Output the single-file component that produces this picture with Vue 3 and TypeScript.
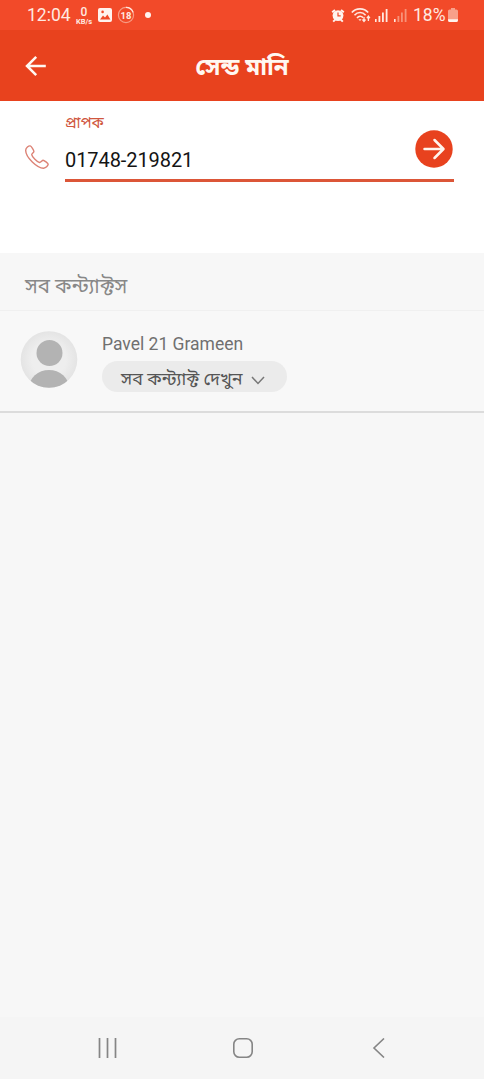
<script setup lang="ts">
import { ref } from 'vue'

interface Contact {
  name: string
  action: string
}

const recipient = ref<string>('01748-219821')
const contacts: Contact[] = [{ name: 'Pavel 21 Grameen', action: 'সব কন্ট্যাক্ট দেখুন' }]
</script>

<template>
  <div class="screen">
    <div class="status">
      <span class="clock">12:04</span>
      <span class="speed"><b>0</b><small>KB/s</small></span>
      <svg class="photo" width="14" height="14" viewBox="0 0 14 14">
        <rect width="14" height="14" rx="2" fill="#fff3ee" />
        <path d="M2 11.5 5 7.5 7 9.6 9.4 6.5 12.4 11.5Z" fill="#f04a28" />
        <circle cx="4.6" cy="3.9" r="1.3" fill="#f04a28" />
      </svg>
      <span class="count">
        <svg width="18" height="18" viewBox="0 0 18 18" fill="none">
          <circle cx="9" cy="9" r="7.6" stroke="#f79b84" stroke-width="1.2" />
          <path d="M9 1.4a7.6 7.6 0 0 1 7.1 5" stroke="#ffe5dc" stroke-width="1.3" />
        </svg>
        <em>18</em>
      </span>
      <i class="dot"></i>
      <span class="grow"></span>
      <svg class="alarm" width="14" height="15" viewBox="0 0 14 15" fill="none" stroke="#fff3ee">
        <circle cx="7" cy="7.6" r="5.4" fill="#fff3ee" stroke="none" />
        <path d="M1.200 4.200 4 1.900M12.800 4.200 10 1.900M2.200 13.600l2-2M11.800 13.600 9.800 11.600" stroke-width="2" />
        <path d="M7 4.600v3.300h2.700" stroke="#f04a28" stroke-width="1.200" />
      </svg>
      <svg class="wifi" width="20" height="16" viewBox="0 0 20 16" fill="none" stroke="#ffe9e1" stroke-width="1.600">
        <path d="M.8 5.500C5 .6 13 .6 17.200 5.500M3.500 8.200c3.100-3.600 8-3.600 11.100 0M6 11c1.800-2.200 4.300-2.200 6-.4" />
        <path d="M7.400 12.200 9 14l1.600-1.800Z" fill="#ffe9e1" stroke="none" />
        <path d="M13 10v4M11.500 12.500 13 14.400l1.500-1.900M17.400 14V9.500M15.900 11.200l1.500-2 1.500 2" stroke-width="1.300" />
      </svg>
      <svg class="bars" width="13" height="13" viewBox="0 0 13 13" fill="#ffe9e1">
        <rect x="0" y="10" width="1.600" height="3" /><rect x="3.500" y="7" width="1.800" height="6" />
        <rect x="7" y="3.500" width="1.800" height="9.500" /><rect x="10.700" y="0" width="1.800" height="13" />
      </svg>
      <svg class="bars second" width="13" height="13" viewBox="0 0 13 13" fill="#f79279">
        <rect x="0" y="10" width="1.600" height="3" fill="#ffe9e1" /><rect x="3.500" y="7" width="1.800" height="6" />
        <rect x="7" y="3.500" width="1.800" height="9.500" /><rect x="10.700" y="0" width="1.800" height="13" />
      </svg>
      <span class="percent">18%</span>
      <svg class="battery" width="10" height="14" viewBox="0 0 10 14">
        <path d="M3 0h4v1.400h1.400Q10 1.400 10 3v9q0 2-1.600 2H1.600Q0 14 0 12V3q0-1.600 1.600-1.600H3Z" fill="#f8a08a" />
        <path d="M0 11.200h10v.8q0 2-1.600 2H1.600Q0 14 0 12Z" fill="#fff3ee" />
      </svg>
    </div>

    <header class="header">
      <svg class="back" width="22" height="22" viewBox="0 0 22 22" fill="none" stroke="#fff8f2" stroke-width="2.500">
        <path d="M20.800 11H2M11.200 1.800 2 11l9.200 9.200" />
      </svg>
      <h1>সেন্ড মানি</h1>
    </header>

    <section class="recipient">
      <svg class="phone" width="24" height="24" viewBox="0 0 24 24" fill="none" stroke="#dc8275" stroke-width="1.400" stroke-linejoin="round">
        <path d="M5.200.9C3.700.6.8 2.900.7 5.200.6 8 3.500 13.300 7.300 17c3.900 3.800 8.400 6.300 11.400 6.200 2.100-.1 4.300-2.200 4.500-4 .1-.8-4.200-4-5.100-4-.9 0-2.500 2.500-3.600 2.300C12.300 17.200 7 11.800 6.700 9.700 6.600 8.700 8.900 7.400 8.900 6.400 8.900 5.500 6.300 1.100 5.200.9Z" />
      </svg>
      <div class="field">
        <label>প্রাপক</label>
        <div class="number">{{ recipient }}</div>
      </div>
      <button class="go">
        <svg width="38" height="38" viewBox="0 0 38 38" fill="none">
          <circle cx="19" cy="19" r="18.700" fill="#e8421e" />
          <path d="M9.500 19h18M19.500 10l9 9-9 9" stroke="#fff5ed" stroke-width="2.500" stroke-linecap="round" stroke-linejoin="round" />
        </svg>
      </button>
    </section>

    <h2>সব কন্ট্যাক্টস</h2>

    <div v-for="c in contacts" :key="c.name" class="contact">
      <svg class="avatar" width="58" height="58" viewBox="0 0 58 58">
        <defs>
          <radialGradient id="disc"><stop offset=".6" stop-color="#eeeeee" /><stop offset="1" stop-color="#e4e4e4" /></radialGradient>
          <clipPath id="round"><circle cx="29" cy="28.500" r="28.300" /></clipPath>
        </defs>
        <circle cx="29" cy="28.500" r="28.300" fill="url(#disc)" />
        <g clip-path="url(#round)" fill="#b3b3b3">
          <circle cx="29.500" cy="22" r="13" />
          <ellipse cx="29" cy="57" rx="20" ry="18" />
        </g>
      </svg>
      <div class="info">
        <div class="name">{{ c.name }}</div>
        <button class="pill">
          <span>{{ c.action }}</span>
          <svg width="14" height="9" viewBox="0 0 14 9" fill="none" stroke="#777" stroke-width="1.500"><path d="M1 1l6 6.500L13 1" /></svg>
        </button>
      </div>
    </div>

    <nav class="nav">
      <svg width="20" height="20" viewBox="0 0 20 20" stroke="#858585" stroke-width="1.700"><path d="M1.500 0v20M9.500 0v20M17.500 0v20" /></svg>
      <svg width="20" height="20" viewBox="0 0 20 20" fill="none" stroke="#858585" stroke-width="1.600"><rect x=".8" y=".8" width="18.400" height="18.400" rx="5.500" /></svg>
      <svg width="20" height="20" viewBox="0 0 20 20" fill="none" stroke="#858585" stroke-width="1.600"><path d="M16 .5 6 10l10 9.500" /></svg>
    </nav>
  </div>
</template>

<style>
body { margin: 0; }
</style>

<style scoped>
.screen {
  width: 484px;
  height: 1079px;
  display: flex;
  flex-direction: column;
  background: #f7f7f7;
  font-family: Roboto, "Noto Sans Bengali", sans-serif;
  overflow: hidden;
}
.screen * { box-sizing: border-box; }
button { border: 0; padding: 0; background: none; font: inherit; }
svg { display: block; flex: none; }

.status {
  height: 30px;
  flex: none;
  display: flex;
  align-items: center;
  padding: 0 26px 0 27px;
  background: #f24a29;
  color: #ffe9e1;
}
.clock { font-size: 17.500px; width: 48px; white-space: nowrap; }
.speed { width: 18px; display: flex; flex-direction: column; align-items: center; padding-top: 2px; }
.speed b { font-size: 12px; line-height: 11px; font-weight: 500; }
.speed small { font-size: 7.500px; line-height: 7px; font-weight: 700; }
.photo { margin-left: 5px; }
.count { display: grid; place-items: center; margin-left: 5px; width: 18px; }
.count > * { grid-area: 1 / 1; }
.count em { font: 700 9.500px Roboto, sans-serif; }
.dot { width: 6px; height: 6px; border-radius: 50%; background: #fff3ee; margin-left: 10px; }
.grow { flex: 1; }
.alarm { margin-right: 6px; }
.wifi { margin-right: 4px; }
.second { margin-left: 6px; }
.percent { font-size: 17.500px; margin-left: 6px; width: 35px; white-space: nowrap; }

.header {
  height: 71px;
  flex: none;
  display: grid;
  grid-template-columns: 60px 1fr 60px;
  align-items: center;
  background: #e8421e;
}
.back { margin-left: 25px; }
h1 { margin: 2px 0 0; text-align: center; color: #fff8f2; font-size: 24px; line-height: 30px; font-weight: 700; }

.recipient {
  height: 152px;
  flex: none;
  display: flex;
  align-items: flex-start;
  padding: 0 30px 0 25px;
  background: #fff;
}
.phone { margin-top: 44px; }
.field { flex: 1; margin-left: 16px; height: 81px; border-bottom: 3px solid #dc5638; padding-top: 11px; color: #141414; }
label { display: block; height: 22px; line-height: 22px; font-size: 15.200px; color: #d0573e; }
.number { margin-top: 14px; font-size: 20px; line-height: 24px; letter-spacing: -.08px; }
.go { display: flex; align-items: flex-start; width: 39px; height: 81px; padding-top: 29px; border-bottom: 3px solid #dc5638; }

h2 {
  margin: 0;
  height: 58px;
  flex: none;
  padding: 3px 25px 0;
  border-bottom: 1px solid #f0f0f0;
  color: #888;
  font-size: 20.500px;
  line-height: 60px;
  font-weight: 400;
}
.contact {
  height: 102px;
  flex: none;
  display: flex;
  align-items: flex-start;
  padding: 20px 20px 0;
  background: #f8f8f8;
  border-bottom: 2px solid #dcdcdc;
}
.info { margin-left: 24px; }
.name { color: #707070; font-size: 17.500px; line-height: 24px; margin-top: 1px; }
.pill {
  width: 185px;
  height: 31px;
  margin-top: 5px;
  padding: 0 22px 0 19px;
  border-radius: 16px;
  display: flex;
  align-items: center;
  justify-content: space-between;
  background: #ebebeb;
  color: #555;
  font-size: 17.900px;
}
.pill span { padding-top: 4px; line-height: 27px; white-space: nowrap; }
.pill svg { margin-top: 7px; }
.nav {
  margin-top: auto;
  height: 62px;
  flex: none;
  display: flex;
  align-items: center;
  justify-content: space-between;
  padding: 0 96px 0 98px;
  background: #f5f5f5;
}
</style>
